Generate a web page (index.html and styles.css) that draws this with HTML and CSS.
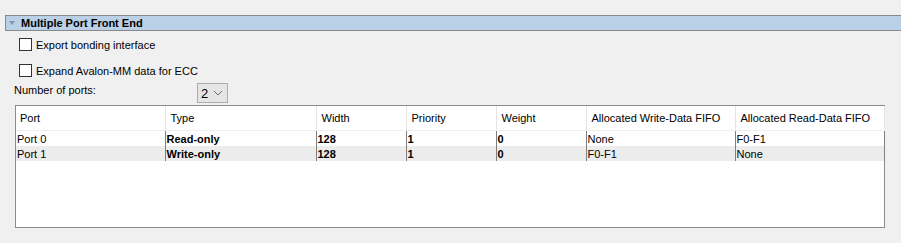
FILE: index.html
```html
<!DOCTYPE html>
<html lang="en">

<head>
  <meta charset="UTF-8">
  <title>Multiple Port Front End</title>
  <link rel="stylesheet" href="styles.css">
</head>

<body>
  <div class="section-head">
    <span class="caret"></span>
    <span>Multiple Port Front End</span>
  </div>

  <div class="section-body">
    <label class="check"><span class="box"></span>Export bonding interface</label>
    <label class="check"><span class="box"></span>Expand Avalon-MM data for ECC</label>

    <div class="ports-row">
      <span class="ports-label">Number of ports:</span>
      <div class="select">
        <span>2</span>
        <svg width="10" height="6" viewBox="0 0 10 6">
          <path d="M1 1 L5 5 L9 1" fill="none" stroke="#6a6a6a" stroke-width="1"/>
        </svg>
      </div>
    </div>

    <div class="grid-wrap">
      <table class="grid">
        <colgroup>
          <col style="width:149px">
          <col style="width:151px">
          <col style="width:90px">
          <col style="width:90px">
          <col style="width:90px">
          <col style="width:149px">
          <col style="width:149px">
        </colgroup>
        <thead>
          <tr>
            <th>Port</th>
            <th>Type</th>
            <th>Width</th>
            <th>Priority</th>
            <th>Weight</th>
            <th>Allocated Write-Data FIFO</th>
            <th>Allocated Read-Data FIFO</th>
          </tr>
        </thead>
        <tbody>
          <tr>
            <td>Port 0</td>
            <td class="b">Read-only</td>
            <td class="b">128</td>
            <td class="b">1</td>
            <td class="b">0</td>
            <td>None</td>
            <td>F0-F1</td>
          </tr>
          <tr class="alt">
            <td>Port 1</td>
            <td class="b">Write-only</td>
            <td class="b">128</td>
            <td class="b">1</td>
            <td class="b">0</td>
            <td>F0-F1</td>
            <td>None</td>
          </tr>
        </tbody>
      </table>
    </div>
  </div>
</body>

</html>
```

FILE: styles.css
```css
body {
  margin: 0;
  background-color: #f0f0f0;
  font-family: "Liberation Sans", Arial, sans-serif;
  font-size: 11px;
  color: #000;
}

.section-head {
  display: flex;
  align-items: center;
  height: 14px;
  margin: 15px 0 0 5px;
  border-top: 1px solid #8a8a8a;
  border-bottom: 1px solid #8a8a8a;
  border-left: 1px solid #8a8a8a;
  background-color: #b9d0e6;
  font-weight: bold;
  font-size: 11px;
}

.caret {
  width: 0;
  height: 0;
  margin: 0 6px 0 3px;
  border-left: 3px solid transparent;
  border-right: 3px solid transparent;
  border-top: 4px solid #8796a8;
}

.section-body {
  padding-top: 7px;
}

.check {
  display: flex;
  align-items: center;
  height: 13px;
  margin: 0 0 13px 19px;
}

.box {
  width: 11px;
  height: 11px;
  margin-right: 4px;
  border: 1px solid #333;
  background-color: #fff;
}

.ports-row {
  display: flex;
  align-items: flex-start;
  margin: -7px 0 0 14px;
  height: 22px;
}

.ports-label {
  width: 183px;
  padding-top: 1px;
}

.select {
  display: flex;
  align-items: center;
  gap: 5px;
  width: 26px;
  height: 18px;
  padding-left: 3px;
  border: 1px solid #adadad;
  background-color: #e5e5e5;
  font-size: 13px;
}

.grid-wrap {
  width: 868px;
  height: 121px;
  margin-left: 15px;
  border: 1px solid #8c8c8c;
  background-color: #fff;
}

.grid {
  border-collapse: collapse;
  table-layout: fixed;
  width: 868px;
}

.grid th {
  height: 24px;
  padding: 0 0 0 5px;
  border-left: 1px solid #e5e5e5;
  border-bottom: 1px solid #f0f0f0;
  font-weight: normal;
  text-align: left;
  white-space: nowrap;
  overflow: hidden;
}

.grid th:first-child {
  border-left: none;
  padding-left: 4px;
}

.grid td {
  height: 15px;
  padding: 0 0 0 1px;
  border-left: 1px solid #7f7f7f;
  white-space: nowrap;
}

.grid td:first-child {
  border-left: none;
}

.grid td:last-child {
  border-right: 1px solid #7f7f7f;
}

.grid th:last-child {
  border-right: 1px solid #e5e5e5;
}

.grid .b {
  font-weight: bold;
}

.grid tr.alt td {
  background-color: #ececec;
}
```
